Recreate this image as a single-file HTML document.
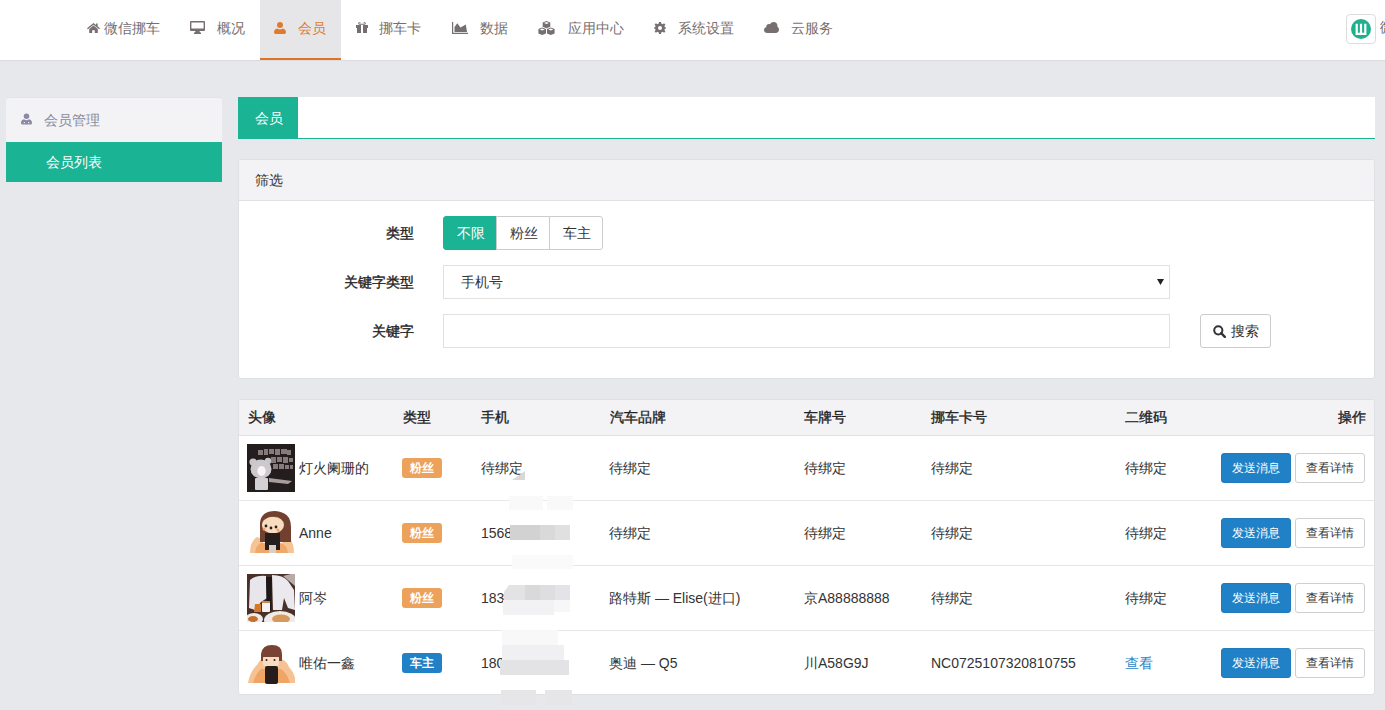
<!DOCTYPE html>
<html><head><meta charset="utf-8">
<style>
*{box-sizing:border-box;margin:0;padding:0}
html,body{width:1385px;height:710px;overflow:hidden}
body{background:#e7e8eb;font-family:"Liberation Sans",sans-serif;font-size:14px;color:#333;position:relative}
.abs{position:absolute;white-space:nowrap}
#nav{position:absolute;left:0;top:0;width:1385px;height:61px;background:#fff;border-bottom:1px solid #dcdcdf}
.ni{position:absolute;top:0;height:60px;color:#776f6f;font-size:14px;white-space:nowrap}
.ni span{position:absolute;top:18px;line-height:20px}
.ni svg{position:absolute;fill:#776f6f}
.ni.act{background:#e6e6e8;color:#e07b2e;border-bottom:2px solid #e07226}
.ni.act svg{fill:#e07b2e}
#side{position:absolute;left:6px;top:97px;width:216px;height:85px;background:#f3f3f6;border-top:1px solid #e4e4e7;border-radius:3px 3px 0 0}
#side .h{position:absolute;left:0;top:0;width:216px;height:44px;color:#8a8a9a}
#side .it{position:absolute;left:0;top:44px;width:216px;height:40px;background:#1ab394;color:#fff}
.panel{position:absolute;background:#fff;border:1px solid #dfe0e3;border-radius:3px}
.lbl{position:absolute;font-weight:400;-webkit-text-stroke:0.35px #222;color:#222;line-height:20px;text-align:right}
.btn{position:absolute;border:1px solid #ccc;background:#fff;color:#333;line-height:20px;text-align:center;font-size:14px;padding-left:1px}
.inp{position:absolute;border:1px solid #e1e1e1;background:#fff}
.th{position:absolute;top:9px;font-weight:400;-webkit-text-stroke:0.35px #222;color:#222;line-height:16px}
.td{position:absolute;color:#333;line-height:16px;white-space:nowrap}
.badge{position:absolute;width:40px;height:20px;border-radius:3px;color:#fff;font-weight:bold;font-size:12px;line-height:20px;text-align:center}
.bo{background:#eda25c}
.bb{background:#2181c6}
.rl{position:absolute;left:0;width:1135px;height:1px;background:#e7e7ea}
.bsend{position:absolute;width:70px;height:30px;background:#2181c6;border:1px solid #1f7bbd;border-radius:3px;color:#fff;font-size:12px;line-height:28px;text-align:center}
.bview{position:absolute;width:70px;height:30px;background:#fff;border:1px solid #cfcfd2;border-radius:3px;color:#333;font-size:12px;line-height:28px;text-align:center}
.av{position:absolute;left:8px;width:48px;height:48px;overflow:hidden}
</style></head><body>
<div id="nav">
  <div class="ni" style="left:80px;width:90px">
    <svg style="left:7px;top:23px" width="13" height="10" viewBox="0 0 13 10"><path d="M6.5 0 L0 5.3 L0.9 6.3 L6.5 1.8 L12.1 6.3 L13 5.3 L10.6 3.3 V0.6 H9 V2 Z M2.2 6 V10 H5.2 V7.2 H7.8 V10 H10.8 V6 L6.5 2.5 Z"/></svg>
    <span style="left:24px">微信挪车</span></div>
  <div class="ni" style="left:180px;width:75px">
    <svg style="left:10px;top:21px" width="15" height="13" viewBox="0 0 15 13"><path fill-rule="evenodd" d="M1 0 H14 A1 1 0 0 1 15 1 V9 A1 1 0 0 1 14 10 H9.5 L10 11.6 H11 V13 H4 V11.6 H5 L5.5 10 H1 A1 1 0 0 1 0 9 V1 A1 1 0 0 1 1 0 Z M1.4 1.4 V7.6 H13.6 V1.4 Z"/></svg>
    <span style="left:37px">概况</span></div>
  <div class="ni act" style="left:260px;width:81px">
    <svg style="left:14px;top:22px" width="12" height="12" viewBox="0 0 12 12"><circle cx="6" cy="3" r="3"/><path d="M0 10.3 C0 8 1.3 6.8 3.2 6.4 Q6 8.3 8.8 6.4 C10.7 6.8 12 8 12 10.3 Q12 12 10.4 12 H1.6 Q0 12 0 10.3Z"/></svg>
    <span style="left:38px">会员</span></div>
  <div class="ni" style="left:345px;width:90px">
    <svg style="left:11px;top:22px" width="12" height="11" viewBox="0 0 12 11"><path fill-rule="evenodd" d="M0 3 H12 V6 H11 V11 H1 V6 H0 Z M5 3 V11 H7 V3 Z"/><path d="M6 3 C4 3 2.2 2.6 2.2 1.4 C2.2 0.4 3.4 0 4.2 0.4 C5 0.8 6 2.2 6 3 C6 2.2 7 0.8 7.8 0.4 C8.6 0 9.8 0.4 9.8 1.4 C9.8 2.6 8 3 6 3Z M3.4 1.4 C3.4 2 4.6 2.3 5.3 2.3 C4.9 1.6 4.2 1 3.8 1 C3.6 1 3.4 1.2 3.4 1.4Z M8.6 1.4 C8.6 2 7.4 2.3 6.7 2.3 C7.1 1.6 7.8 1 8.2 1 C8.4 1 8.6 1.2 8.6 1.4Z" fill-rule="evenodd"/></svg>
    <span style="left:34px">挪车卡</span></div>
  <div class="ni" style="left:445px;width:70px">
    <svg style="left:7px;top:22px" width="16" height="12" viewBox="0 0 16 12"><path d="M0 0 H1.2 V10.8 H16 V12 H0 Z M2.5 10 V5 L5.3 1.2 L8.5 5.5 L13.8 2.5 L15 10 Z"/></svg>
    <span style="left:35px">数据</span></div>
  <div class="ni" style="left:530px;width:100px">
    <svg style="left:8px;top:21px" width="17" height="14" viewBox="0 0 17 14"><path fill-rule="evenodd" d="M8.5 0 L12.3 1.5 V5.8 L8.5 7.2 L4.7 5.8 V1.5 Z M8.5 1 L6 2 L8.5 3 L11 2 Z"/><path fill-rule="evenodd" d="M4.2 6.6 L8 8.1 V12.5 L4.2 14 L0.4 12.5 V8.1 Z M4.2 7.6 L1.7 8.6 L4.2 9.6 L6.7 8.6 Z"/><path fill-rule="evenodd" d="M12.8 6.6 L16.6 8.1 V12.5 L12.8 14 L9 12.5 V8.1 Z M12.8 7.6 L10.3 8.6 L12.8 9.6 L15.3 8.6 Z"/></svg>
    <span style="left:38px">应用中心</span></div>
  <div class="ni" style="left:645px;width:100px">
    <svg style="left:9px;top:22px" width="12" height="12" viewBox="0 0 12 12"><path fill-rule="evenodd" d="M5 0 H7 L7.4 1.7 L8.6 2.2 L10.1 1.3 L10.7 1.9 L11.4 2.6 L10.4 4.1 L10.9 5.2 L12 5.5 V6.5 L10.9 6.8 L10.4 8 L11.4 9.4 L10.1 10.7 L8.6 9.8 L7.4 10.3 L7 12 H5 L4.6 10.3 L3.4 9.8 L1.9 10.7 L0.6 9.4 L1.6 8 L1.1 6.8 L0 6.5 V5.5 L1.1 5.2 L1.6 4.1 L0.6 2.6 L1.9 1.3 L3.4 2.2 L4.6 1.7 Z M6 4 A2 2 0 1 0 6 8 A2 2 0 1 0 6 4 Z"/></svg>
    <span style="left:33px">系统设置</span></div>
  <div class="ni" style="left:755px;width:90px">
    <svg style="left:9px;top:22px" width="15" height="11" viewBox="0 0 15 11"><path d="M3.3 11 C1.4 11 0 9.7 0 8 C0 6.6 0.9 5.5 2.2 5.2 C2.2 5.1 2.2 5 2.2 4.9 C2.2 3.3 3.5 2.1 5 2.1 C5.4 2.1 5.8 2.2 6.1 2.3 C6.8 0.9 8.1 0 9.6 0 C11.8 0 13.5 1.7 13.5 3.9 C13.5 4.2 13.5 4.5 13.4 4.8 C14.4 5.4 15 6.6 15 7.8 C15 9.6 13.5 11 11.7 11 Z"/></svg>
    <span style="left:36px">云服务</span></div>
  <!-- right avatar -->
  <div class="abs" style="left:1346px;top:14px;width:30px;height:30px;border:1px solid #ddd;border-radius:4px;background:#fff">
    <svg style="position:absolute;left:4px;top:4px" width="20" height="20" viewBox="0 0 20 20"><circle cx="10" cy="10" r="10" fill="#1fb08e"/><path d="M4.6 4.7 H6.8 V13.8 H8.9 V4.7 H11.1 V13.8 H13.2 V4.7 H15.4 V16 H4.6 Z" fill="#fff"/></svg>
  </div>
  <span class="abs" style="left:1380px;top:17px;color:#555;line-height:20px">微信</span>
</div>

<div id="side">
  <svg style="position:absolute;left:15px;top:15px" width="11" height="12" viewBox="0 0 12 12"><g fill="#8b87a4"><circle cx="6" cy="3" r="3"/><path d="M0 10.3 C0 8 1.3 6.8 3.2 6.4 Q6 8.3 8.8 6.4 C10.7 6.8 12 8 12 10.3 Q12 12 10.4 12 H1.6 Q0 12 0 10.3Z"/></g><rect x="3" y="9.3" width="1.3" height="1.3" fill="#f3f3f6"/><rect x="7.7" y="9.3" width="1.3" height="1.3" fill="#f3f3f6"/></svg>
  <div class="h"><span class="abs" style="left:38px;top:14px;line-height:16px">会员管理</span></div>
  <div class="it"><span class="abs" style="left:40px;top:12px;line-height:16px">会员列表</span></div>
</div>

<!-- tab header -->
<div class="abs" style="left:238px;top:97px;width:1137px;height:42px;background:#fff;border-bottom:1px solid #1ab394">
  <div class="abs" style="left:0;top:0;width:60px;height:42px;background:#1ab394;color:#fff"><span class="abs" style="left:17px;top:13px;line-height:16px">会员</span></div>
</div>

<!-- filter panel -->
<div class="panel" style="left:238px;top:159px;width:1137px;height:220px">
  <div class="abs" style="left:0;top:0;width:1135px;height:41px;background:#f3f3f5;border-bottom:1px solid #e1e1e4;border-radius:3px 3px 0 0"></div>
  <span class="abs" style="left:16px;top:12px;line-height:16px;color:#333;font-size:14px">筛选</span>
  <span class="lbl" style="left:104px;width:71px;top:63px">类型</span>
  <div class="abs" style="left:204px;top:56px;width:160px;height:34px">
    <div class="btn" style="left:0;top:0;width:54px;height:34px;background:#1ab394;border-color:#1ab394;color:#fff;line-height:32px;border-radius:3px 0 0 3px">不限</div>
    <div class="btn" style="left:53px;top:0;width:54px;height:34px;line-height:32px">粉丝</div>
    <div class="btn" style="left:106px;top:0;width:54px;height:34px;line-height:32px;border-radius:0 3px 3px 0">车主</div>
  </div>
  <span class="lbl" style="left:64px;width:111px;top:112px">关键字类型</span>
  <div class="inp" style="left:204px;top:105px;width:727px;height:34px">
    <span class="abs" style="left:17px;top:8px;line-height:16px;color:#333">手机号</span>
    <svg style="position:absolute;left:713px;top:13px" width="7" height="6" viewBox="0 0 7 6"><path d="M0 0 H7 L3.5 6 Z" fill="#222"/></svg>
  </div>
  <span class="lbl" style="left:64px;width:111px;top:161px">关键字</span>
  <div class="inp" style="left:204px;top:154px;width:727px;height:34px"></div>
  <div class="btn" style="left:961px;top:154px;width:71px;height:34px;border-radius:3px;line-height:32px;border-color:#ccc">
    <svg style="position:absolute;left:12px;top:10px" width="13" height="13" viewBox="0 0 13 13"><circle cx="5.3" cy="5.3" r="4.1" fill="none" stroke="#333" stroke-width="2"/><path d="M8.2 8.2 L11.8 11.8" stroke="#333" stroke-width="2.4" stroke-linecap="round"/></svg>
    <span class="abs" style="left:30px;top:8px;line-height:16px">搜索</span>
  </div>
</div>

<!-- table panel -->
<div class="panel" style="left:238px;top:399px;width:1137px;height:296px;overflow:hidden">
  <div class="abs" style="left:0;top:0;width:1135px;height:35px;background:#f3f3f5"></div>
  <div class="rl" style="top:35px;background:#e0e0e3"></div>
  <span class="th" style="left:9px">头像</span>
  <span class="th" style="left:164px">类型</span>
  <span class="th" style="left:242px">手机</span>
  <span class="th" style="left:371px">汽车品牌</span>
  <span class="th" style="left:565px">车牌号</span>
  <span class="th" style="left:692px">挪车卡号</span>
  <span class="th" style="left:886px">二维码</span>
  <span class="th" style="left:1099px">操作</span>

  <div class="av" style="top:44px"><svg width="48" height="48" viewBox="0 0 48 48"><rect width="48" height="48" fill="#241d1d"/>
<g fill="#a89a9a" opacity="0.75">
<rect x="11" y="6" width="5" height="5"/><rect x="17" y="5" width="4" height="6"/><rect x="22" y="5" width="5" height="5"/><rect x="28" y="5" width="5" height="6"/><rect x="34" y="5" width="6" height="5"/><rect x="40" y="6" width="4" height="5"/>
<rect x="24" y="13" width="5" height="6"/><rect x="30" y="13" width="5" height="5"/><rect x="36" y="13" width="5" height="6"/><rect x="42" y="14" width="4" height="4"/>
<rect x="26" y="20" width="5" height="5"/><rect x="32" y="20" width="5" height="5"/><rect x="38" y="21" width="4" height="4"/><rect x="43" y="21" width="3" height="4"/>
</g>
<circle cx="6" cy="18" r="3.6" fill="#c8c6c8"/><circle cx="21" cy="17" r="3.2" fill="#c8c6c8"/>
<ellipse cx="14" cy="25" rx="10.5" ry="9.5" fill="#cbc9cb"/><ellipse cx="14.5" cy="27" rx="4.2" ry="5" fill="#f6f4f4"/>
<rect x="8" y="34" width="13" height="12" rx="1" fill="#d2d0d2"/>
<path d="M22 34 L45 37 L41 40 L22 38 Z" fill="#a79d9d"/></svg></div>
  <span class="td" style="left:60px;top:60px">灯火阑珊的</span>
  <div class="badge bo" style="left:163px;top:58px">粉丝</div>
  <span class="td" style="left:242px;top:60px">待绑定</span>
  <span class="td" style="left:370px;top:60px">待绑定</span>
  <span class="td" style="left:565px;top:60px">待绑定</span>
  <span class="td" style="left:692px;top:60px">待绑定</span>
  <span class="td" style="left:886px;top:60px">待绑定</span>
  <div class="bsend" style="left:982px;top:53px">发送消息</div>
  <div class="bview" style="left:1056px;top:53px">查看详情</div>
  <div class="av" style="top:109px"><svg width="48" height="48" viewBox="0 0 48 48"><rect width="48" height="48" fill="#fff"/>
<path d="M3 44 Q3 32 10 28 L16 30 L16 41 L34 41 L36 30 L42 28 Q47 34 47 44 Z" fill="#f6c494"/>
<path d="M8 44 Q9 36 14 34 L34 34 Q40 36 41 44 Z" fill="#f0a86a"/>
<path d="M13 33 L13 14 Q14 2 28 2 Q44 3 44 18 L44 33 Z" fill="#72402f"/>
<ellipse cx="26" cy="16" rx="11" ry="8.5" fill="#f8dcc0"/>
<path d="M16 12 Q24 4 36 11 L30 8 Q22 5 16 12Z" fill="#72402f"/>
<circle cx="19" cy="17" r="1.4" fill="#2a1d1a"/><circle cx="24" cy="19" r="1.4" fill="#2a1d1a"/><circle cx="29" cy="18" r="1.4" fill="#2a1d1a"/>
<circle cx="17" cy="20" r="1.5" fill="#f0a070"/><circle cx="31" cy="21" r="1.5" fill="#f0a070"/>
<rect x="18" y="24" width="15" height="17" fill="#261d1d"/><rect x="22" y="36" width="7" height="8" fill="#d9cfc8"/></svg></div>
  <span class="td" style="left:60px;top:125px">Anne</span>
  <div class="badge bo" style="left:163px;top:123px">粉丝</div>
  <span class="td" style="left:242px;top:125px">1568</span>
  <span class="td" style="left:370px;top:125px">待绑定</span>
  <span class="td" style="left:565px;top:125px">待绑定</span>
  <span class="td" style="left:692px;top:125px">待绑定</span>
  <span class="td" style="left:886px;top:125px">待绑定</span>
  <div class="bsend" style="left:982px;top:118px">发送消息</div>
  <div class="bview" style="left:1056px;top:118px">查看详情</div>
  <div class="av" style="top:174px"><svg width="48" height="48" viewBox="0 0 48 48"><rect width="48" height="48" fill="#4a3029"/>
<path d="M3 6 Q8 1 19 2 L20 24 L14 28 L8 36 L2 34 Z" fill="#e8e6eb"/>
<path d="M25 1 Q36 1 41 7 L47 16 L48 36 L41 34 L37 24 L35 36 L26 36 Z" fill="#ebe9ee"/>
<path d="M36 2 L44 0 L48 0 L48 12 Z" fill="#b8aca8"/>
<path d="M19 3 L25 3 L24.5 36 L21 38 L19.5 34 Z" fill="#1e1717"/>
<rect x="15" y="27" width="8" height="11" rx="1" fill="#f5f3f1"/><rect x="15" y="27" width="8" height="2" fill="#c88a50"/>
<path d="M8 30 L14 30 L14 38 L7 38 Z" fill="#d4782c"/>
<ellipse cx="7" cy="45" rx="9" ry="6" fill="#eeeae8"/><ellipse cx="33" cy="46" rx="16" ry="9" fill="#efebe8"/>
<ellipse cx="6" cy="45" rx="5" ry="3" fill="#c4702c"/><ellipse cx="34" cy="45" rx="9" ry="4.5" fill="#d8995c"/></svg></div>
  <span class="td" style="left:60px;top:190px">阿岑</span>
  <div class="badge bo" style="left:163px;top:188px">粉丝</div>
  <span class="td" style="left:242px;top:190px">183</span>
  <span class="td" style="left:370px;top:190px">路特斯 — Elise(进口)</span>
  <span class="td" style="left:565px;top:190px">京A88888888</span>
  <span class="td" style="left:692px;top:190px">待绑定</span>
  <span class="td" style="left:886px;top:190px">待绑定</span>
  <div class="bsend" style="left:982px;top:183px">发送消息</div>
  <div class="bview" style="left:1056px;top:183px">查看详情</div>
  <div class="av" style="top:239px"><svg width="48" height="48" viewBox="0 0 48 48"><rect width="48" height="48" fill="#fff"/>
<path d="M1 44 Q3 32 10 26 Q13 20 16 20 L34 20 Q40 22 42 28 Q48 34 49 44 Z" fill="#f6c294"/>
<path d="M6 44 Q9 34 14 30 L34 30 Q40 34 43 44 Z" fill="#efa565"/>
<path d="M14 22 L14 15 Q15 6 25 6 Q35 6 35 15 L35 22 Z" fill="#7a4232"/>
<rect x="16" y="17" width="16" height="10" rx="2" fill="#f8dcc2"/><rect x="16" y="15" width="16" height="3" fill="#7a4232"/>
<circle cx="19.5" cy="21" r="1" fill="#222"/><circle cx="27.5" cy="21" r="1" fill="#222"/>
<rect x="18" y="27" width="13" height="18" rx="2" fill="#261c1c"/></svg></div>
  <span class="td" style="left:60px;top:255px">唯佑一鑫</span>
  <div class="badge bb" style="left:163px;top:253px">车主</div>
  <span class="td" style="left:242px;top:255px">180</span>
  <span class="td" style="left:370px;top:255px">奥迪 — Q5</span>
  <span class="td" style="left:565px;top:255px">川A58G9J</span>
  <span class="td" style="left:692px;top:255px">NC0725107320810755</span>
  <span class="td" style="left:886px;top:255px"><span style="color:#2a85c9">查看</span></span>
  <div class="bsend" style="left:982px;top:248px">发送消息</div>
  <div class="bview" style="left:1056px;top:248px">查看详情</div>
  <div class="rl" style="top:100px"></div>
  <div class="rl" style="top:165px"></div>
  <div class="rl" style="top:230px"></div>
</div>

<!-- redaction mosaic -->
<svg class="abs" style="left:0;top:0" width="1385" height="710">
<path d="M525 471 V480 H512 Z" fill="#d8d8d8"/>
<rect x="509" y="496" width="34" height="14" fill="#f9f9f9"/><rect x="547" y="496" width="26" height="14" fill="#f9f9f9"/>
<rect x="510" y="525" width="30" height="15" fill="#d2d2d2"/><rect x="540" y="525" width="15" height="15" fill="#d9d9d9"/><rect x="555" y="525" width="15" height="15" fill="#e0e0e0"/>
<rect x="512" y="555" width="61" height="14" fill="#fafafa"/>
<path d="M509 585 H525 V600 H504 V592 Z" fill="#e3e3e5"/><rect x="525" y="585" width="15" height="15" fill="#d9d9d9"/><rect x="540" y="585" width="15" height="15" fill="#dedee0"/><rect x="555" y="585" width="15" height="15" fill="#e4e4e8"/>
<rect x="503" y="600" width="51" height="15" fill="#f2f2f4"/><rect x="554" y="600" width="16" height="12" fill="#f7f7f8"/>
<rect x="502" y="630" width="56" height="15" fill="#f8f8f8"/>
<rect x="502" y="645" width="62" height="15" fill="#f0f0f2"/>
<rect x="500" y="660" width="69" height="15" fill="#e3e3e5"/>
<rect x="501" y="690" width="35" height="15" fill="#e6e6e8"/><rect x="545" y="690" width="27" height="15" fill="#e6e6e8"/>
</svg>
</body></html>
